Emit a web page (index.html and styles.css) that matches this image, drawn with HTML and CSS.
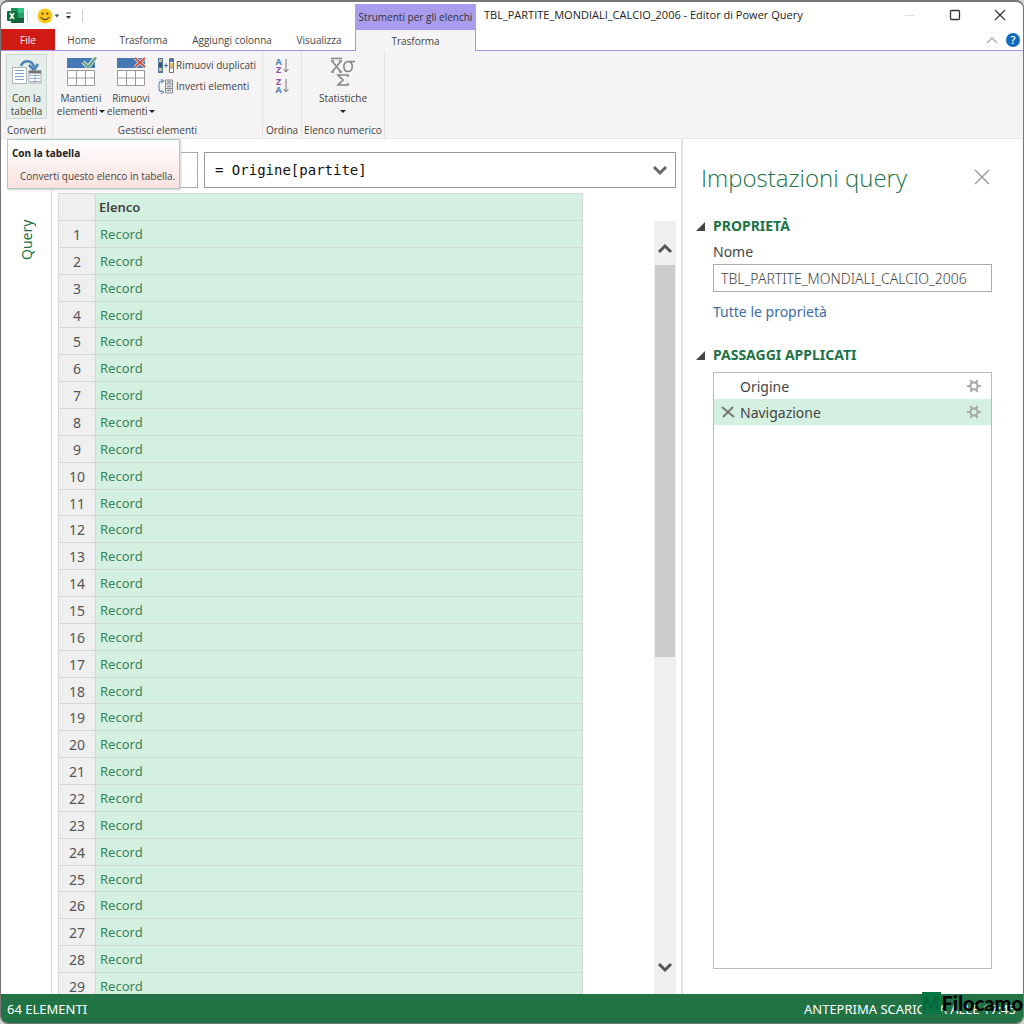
FILE: index.html
```html
<!DOCTYPE html>
<html lang="it">
<head>
<meta charset="utf-8">
<meta name="viewport" content="width=device-width, initial-scale=1">
<title>TBL_PARTITE_MONDIALI_CALCIO_2006 - Editor di Power Query</title>
<link rel="stylesheet" href="styles.css">
</head>
<body>
<div class="window">
  <header class="header">
    <div class="quick">
      <svg class="excel" width="18" height="18" viewBox="0 0 18 18" aria-hidden="true">
        <rect x="4" y="1" width="13" height="15" rx="1" fill="#21a366"/>
        <path d="M4 1h7v5H4z" fill="#1d9358"/><path d="M11 1h5a1 1 0 0 1 1 1v4h-6z" fill="#33c481"/>
        <path d="M4 6h7v5H4z" fill="#107c41"/><path d="M4 11h13v4a1 1 0 0 1-1 1H5a1 1 0 0 1-1-1z" fill="#185c37"/>
        <rect x="0" y="4" width="10" height="10" rx="1" fill="#0f7038"/>
        <path d="M3 6l4 6M7 6l-4 6" stroke="#fff" stroke-width="1.5"/>
      </svg>
      <span class="bar"></span>
      <button class="plain smile" aria-label="Invia feedback">
        <svg width="22" height="16" viewBox="0 0 22 16">
          <circle cx="8" cy="8" r="7.5" fill="#fcc71a"/>
          <circle cx="5.6" cy="5.6" r="1.1" fill="#4d3c20"/><circle cx="10.4" cy="5.6" r="1.1" fill="#4d3c20"/>
          <path d="M3.6 9.2q4.4 5 8.8 0" fill="none" stroke="#5b4316" stroke-width="1.2"/>
          <path d="M17.500 6.500h5l-2.500 3z" fill="#365a50"/>
        </svg>
      </button>
      <button class="plain" aria-label="Personalizza barra di accesso rapido">
        <svg width="7" height="8" viewBox="0 0 7 8"><path d="M1 1h5" stroke="#555"/><path d="M1 4h5L3.500 7z" fill="#333"/></svg>
      </button>
      <span class="bar last"></span>
    </div>
    <div class="context-title">Strumenti per gli elenchi</div>
    <div class="title">
      <span class="title-text">TBL_PARTITE_MONDIALI_CALCIO_2006 - Editor di Power Query</span>
      <div class="controls">
        <button class="plain" aria-label="Riduci a icona"><svg width="12" height="12" viewBox="0 0 12 12"><path d="M1 6.500h10" stroke="#ddd"/></svg></button>
        <button class="plain" aria-label="Ingrandisci"><svg width="12" height="12" viewBox="0 0 12 12"><rect x="1.500" y="1.500" width="9" height="9" rx="1" fill="none" stroke="#333" stroke-width="1.300"/></svg></button>
        <button class="plain" aria-label="Chiudi"><svg width="12" height="12" viewBox="0 0 12 12"><path d="M1 1l10 10M11 1l-10 10" stroke="#333" stroke-width="1.200"/></svg></button>
      </div>
    </div>
    <nav class="tabs">
      <button class="tab file">File</button>
      <button class="tab home">Home</button>
      <button class="tab transform">Trasforma</button>
      <button class="tab add">Aggiungi colonna</button>
      <button class="tab view">Visualizza</button>
    </nav>
    <button class="tab active">Trasforma</button>
    <div class="tab-tools">
      <button class="plain" aria-label="Comprimi barra multifunzione"><svg width="12" height="8" viewBox="0 0 12 8"><path d="M1 7l5-5 5 5" fill="none" stroke="#aaa" stroke-width="1.300"/></svg></button>
      <button class="plain help" aria-label="Guida">?</button>
    </div>
  </header>

  <section class="ribbon" aria-label="Barra multifunzione">
    <div class="group convert">
      <div class="tools">
        <button class="big selected">
          <svg width="32" height="28" viewBox="0 0 32 28">
            <path d="M10 8C12 2 21 1 23 9" fill="none" stroke="#4a7fb8" stroke-width="2.500"/><path d="M18 7l5 5 4-6" fill="none" stroke="#4a7fb8" stroke-width="2.500"/>
            <rect x="1.500" y="9.500" width="14" height="16" fill="#fff" stroke="#b0b5b8"/><path d="M4 12.500h9M4 15.500h9M4 18.500h9M4 21.500h9" stroke="#7aa3d0"/>
            <rect x="18" y="13" width="12" height="12" fill="#fff" stroke="#aaa"/><path d="M18 14h12" stroke="#777" stroke-width="3"/><path d="M19 17.500h10M19 20.500h10M19 23.500h10" stroke="#8db2d8"/><path d="M24 15v10" stroke="#aaa"/>
          </svg>
          <span>Con la<br>tabella</span>
        </button>
      </div>
      <div class="caption">Converti</div>
    </div>
    <div class="group manage">
      <div class="tools">
        <button class="big">
          <svg width="32" height="30" viewBox="0 0 32 30">
            <path d="M2 1h28v10H2z" fill="#4579b5"/><path d="M2.500 13.500h27v15h-27zM2.500 21h27M11.500 13.500v15M20.500 13.500v15" fill="#fff" stroke="#9a9a9a"/>
            <path d="M18 5l5 5 8-10" fill="none" stroke="#dfe8e6" stroke-width="4"/><path d="M18 5l5 5 8-9.500" fill="none" stroke="#69a184" stroke-width="2.300"/>
          </svg>
          <span>Mantieni<br>elementi <i class="down"></i></span>
        </button>
        <button class="big">
          <svg width="32" height="30" viewBox="0 0 32 30">
            <path d="M2 1h28v10H2z" fill="#4579b5"/><path d="M2.500 13.500h27v15h-27zM2.500 21h27M11.500 13.500v15M20.500 13.500v15" fill="#fff" stroke="#9a9a9a"/>
            <path d="M20 1l10 9M30 1l-10 9" stroke="#dfe3ea" stroke-width="3.500"/><path d="M20 1l10 9M30 1l-10 9" stroke="#cc5a45" stroke-width="2"/>
          </svg>
          <span>Rimuovi<br>elementi <i class="down"></i></span>
        </button>
        <div class="stack">
          <button class="small">
            <svg width="16" height="15" viewBox="0 0 16 15"><path d="M0 0h5v15H0z" fill="#4b78a8"/><path d="M1 1h3v3H1zM1 10h3v3H1z" fill="#e9b96b"/><path d="M1 5h3v4H1z" fill="#456"/><path d="M6 7.500h4M8 5.500v4" stroke="#4b7fb8" stroke-width="1.200"/><path d="M11.500.5h4v14h-4zM11.500 10h4" fill="#fff" stroke="#777"/><path d="M11 1h5v3h-5z" fill="#4b78a8"/><path d="M12 5h3v4h-3z" fill="#e9b96b"/></svg>
            Rimuovi duplicati</button>
          <button class="small">
            <svg width="16" height="15" viewBox="0 0 16 15"><path d="M5 2H3Q1 2 1 5v5q0 3 3 3" fill="none" stroke="#4b7fb8"/><path d="M3 0l3 2-3 2M3 11l3 2-3 2" fill="none" stroke="#4b7fb8"/><path d="M7.500 1h7v13h-7zM7.500 5h7M7.500 9.500h7" fill="#eee" stroke="#888"/><path d="M9 3h4M9 7.500h4M9 11.500h4" stroke="#7b92a8" stroke-width="1.500"/></svg>
            Inverti elementi</button>
        </div>
      </div>
      <div class="caption">Gestisci elementi</div>
    </div>
    <div class="group order">
      <div class="tools stack">
        <button class="plain sort" aria-label="Ordina crescente"><span><b class="a">A</b><b class="z">Z</b></span><svg width="6" height="14" viewBox="0 0 6 14"><path d="M3 0v13M.5 10L3 13l2.500-3" fill="none" stroke="#777"/></svg></button>
        <button class="plain sort" aria-label="Ordina decrescente"><span><b class="z">Z</b><b class="a">A</b></span><svg width="6" height="14" viewBox="0 0 6 14"><path d="M3 0v13M.5 10L3 13l2.500-3" fill="none" stroke="#777"/></svg></button>
      </div>
      <div class="caption">Ordina</div>
    </div>
    <div class="group numeric">
      <div class="tools">
        <button class="big">
          <svg width="28" height="30" viewBox="0 0 28 30" fill="none" stroke="#858585" stroke-width="1.600">
            <path d="M2 1.500h11M3 4l9 11M12 4L3 15M2 4h3M10 4h3M2 15h3M10 15h3"/><path d="M26 4.500h-7c-6 1-5 10 0 10s6-8 1-10"/><path d="M19 20v-2H9l5 5-5 5h10v-2"/>
          </svg>
          <span>Statistiche<br><i class="down"></i></span>
        </button>
      </div>
      <div class="caption">Elenco numerico</div>
    </div>
    <div class="tooltip" role="tooltip"><strong>Con la tabella</strong><p>Converti questo elenco in tabella.</p></div>
  </section>

  <main class="main">
    <aside class="rail"><button class="plain query-label">Query</button></aside>
    <section class="work">
      <div class="formula-row">
        <div class="fx"><span>:</span></div>
        <div class="formula">
          <input type="text" aria-label="Barra della formula" value="= Origine[partite]">
          <button class="plain" aria-label="Espandi"><svg width="16" height="12" viewBox="0 0 16 12"><path d="M2 3l6 6 6-6" fill="none" stroke="#666" stroke-width="3"/></svg></button>
        </div>
      </div>
      <div class="data">
        <div class="table-clip">
          <table class="list">
            <thead><tr><th class="num"></th><th>Elenco</th></tr></thead>
            <tbody id="rows"></tbody>
          </table>
        </div>
        <div class="scrollbar">
          <button class="plain" aria-label="Su"><svg width="16" height="12" viewBox="0 0 16 12"><path d="M2 9l6-6 6 6" fill="none" stroke="#555" stroke-width="3"/></svg></button>
          <div class="track"><div class="thumb"></div></div>
          <button class="plain" aria-label="Giù"><svg width="16" height="12" viewBox="0 0 16 12"><path d="M2 3l6 6 6-6" fill="none" stroke="#555" stroke-width="3"/></svg></button>
        </div>
      </div>
    </section>
    <aside class="settings">
      <div class="settings-head">
        <h1>Impostazioni query</h1>
        <button class="plain" aria-label="Chiudi riquadro"><svg width="16" height="16" viewBox="0 0 16 16"><path d="M1 1l14 14M15 1L1 15" stroke="#999" stroke-width="1.400"/></svg></button>
      </div>
      <h2><i class="corner"></i>PROPRIETÀ</h2>
      <div class="properties">
        <label for="name">Nome</label>
        <input id="name" type="text" value="TBL_PARTITE_MONDIALI_CALCIO_2006">
        <a href="#">Tutte le proprietà</a>
      </div>
      <h2><i class="corner"></i>PASSAGGI APPLICATI</h2>
      <ul class="steps">
        <li><span class="del"></span><span class="step">Origine</span>
          <button class="plain" aria-label="Impostazioni Origine"><svg width="14" height="14" viewBox="0 0 14 14" fill="none" stroke="#aaa"><circle cx="7" cy="7" r="3.600" stroke-width="2.200"/><path d="M0 7h3M11 7h3M3.500 1l1.500 3M10.500 1L9 4M3.500 13L5 10M10.500 13L9 10" stroke-width="2"/></svg></button></li>
        <li class="current"><button class="plain del" aria-label="Elimina passaggio"><svg width="14" height="12" viewBox="0 0 14 12"><path d="M1 1l12 10M12 1L2 11" stroke="#777" stroke-width="1.800"/></svg></button><span class="step">Navigazione</span>
          <button class="plain" aria-label="Impostazioni Navigazione"><svg width="14" height="14" viewBox="0 0 14 14" fill="none" stroke="#aaa"><circle cx="7" cy="7" r="3.600" stroke-width="2.200"/><path d="M0 7h3M11 7h3M3.500 1l1.500 3M10.500 1L9 4M3.500 13L5 10M10.500 13L9 10" stroke-width="2"/></svg></button></li>
      </ul>
    </aside>
  </main>

  <footer class="status">
    <span>64 ELEMENTI</span><span>ANTEPRIMA SCARICATA ALLE 17:45</span>
    <div class="brand"><span class="brand-mark">M</span><span class="brand-name">Filocamo</span></div>
  </footer>
</div>
<script src="rows.js"></script>
</body>
</html>
```

FILE: styles.css
```css
* { box-sizing: border-box; }
body {
  margin: 0;
  background: #d4d4d4;
  font-family: "Open Sans", "Noto Sans", sans-serif;
  color: #444;
}
button, input { font: inherit; color: inherit; }
button { border: 0; padding: 0; background: none; }
svg { display: block; flex: none; }
.plain { display: flex; align-items: center; justify-content: center; }

.window {
  height: 100vh;
  display: flex;
  flex-direction: column;
  background: #fff;
  border: 1px solid #777;
  border-top-width: 2px;
  border-radius: 8px;
  overflow: hidden;
}

/* Title bar and tabs */
.header {
  display: grid;
  grid-template-columns: 354px 121px 1fr;
  grid-template-rows: 27px 22px;
  font-size: 10px;
  flex: none;
}
.quick { display: flex; align-items: center; padding-left: 6px; }
.bar { width: 1px; height: 12px; background: #ccd6d2; margin: 0 9px 0 2px; }
.bar.last { margin-left: 10px; }
.smile { margin-right: 6px; }
.context-title {
  margin-top: 2px;
  background: #a99cec;
  color: #333;
  line-height: 27px;
  text-align: center;
  white-space: nowrap;
}
.title { display: flex; align-items: center; justify-content: space-between; padding: 0 17px 2px 8px; color: #222; min-width: 0; }
.title-text { font-size: 11px; white-space: nowrap; }
.controls { display: flex; gap: 33px; }
.tabs { display: flex; border-bottom: 1px solid #a394ea; }
.tab { text-align: center; line-height: 22px; white-space: nowrap; }
.file { width: 54px; background: #cf1b14; color: #fff; }
.home { width: 53px; }
.transform { width: 71px; }
.add { width: 106px; }
.view { width: 68px; }
.active { background: #f5f3f4; border: 1px solid #a394ea; border-bottom: 0; line-height: 20px; }
.tab-tools { display: flex; justify-content: flex-end; align-items: center; gap: 8px; padding-right: 3px; border-bottom: 1px solid #a394ea; }
.help { width: 14px; height: 14px; border-radius: 50%; background: #0f6cbd; color: #fff; font-size: 11px; font-weight: 600; }

/* Ribbon */
.ribbon {
  position: relative;
  display: flex;
  height: 88px;
  flex: none;
  background: #f5f3f4;
  border-bottom: 1px solid #e8e6e7;
  font-size: 10px;
}
.group { display: flex; flex-direction: column; justify-content: space-between; padding-top: 3px; border-right: 1px solid #e3e1e2; }
.convert { width: 52px; }
.manage { width: 210px; }
.order { width: 39px; }
.numeric { width: 83px; }
.tools { display: flex; }
.convert .tools { padding-left: 5px; }
.numeric .tools { justify-content: center; }
.big { display: flex; flex-direction: column; align-items: center; justify-content: space-between; width: 50px; height: 65px; padding: 3px 0 1px; line-height: 13px; white-space: nowrap; }
.selected { width: 41px; background: #e6eeea; border: 1px solid #c8dbd2; padding-bottom: 0; }
.down { display: inline-block; border: 3px solid transparent; border-top: 3px solid #222; border-bottom: 0; vertical-align: 2px; margin-left: -1px; }
.caption { text-align: center; line-height: 16px; white-space: nowrap; }
.stack { display: flex; flex-direction: column; gap: 6px; padding-top: 4px; }
.manage .stack { padding-left: 2px; }
.manage .tools { padding-left: 3px; }
.small { display: flex; align-items: center; gap: 2px; line-height: 15px; white-space: nowrap; }
.sort { gap: 1px; height: 16px; font-size: 9px; line-height: 8px; }
.order .stack { align-items: center; gap: 4px; }
.sort b { display: block; }
.a { color: #4b7fb8; }
.z { color: #8a55ab; }
.tooltip {
  position: absolute;
  left: 6px;
  top: 88px;
  width: 173px;
  height: 50px;
  z-index: 2;
  padding: 6px 4px;
  background: linear-gradient(#fff, #f9e2df);
  border: 1px solid #a9cdbe;
  box-shadow: 1px 1px 2px #ccc;
  line-height: 14px;
  white-space: nowrap;
}
.tooltip strong { color: #222; }
.tooltip p { margin: 9px 0 0 8px; }

/* Workspace */
.main, .status { font-family: "Noto Sans", "Open Sans", sans-serif; }
.main { display: flex; flex: 1; min-height: 0; }
.rail { width: 51px; border-right: 1px solid #d8d8d8; padding-top: 76px; flex: none; }
.query-label { writing-mode: vertical-rl; transform: rotate(180deg); width: 50px; height: 50px; color: #217346; font-size: 14px; }
.work { flex: 1; min-width: 0; display: flex; flex-direction: column; padding: 13px 5px 0 6px; }
.formula-row { display: flex; gap: 6px; flex: none; }
.fx { width: 140px; height: 36px; border: 1px solid #aaa; padding: 6px 16px; text-align: right; color: #aaa; font-size: 14px; }
.formula { flex: 1; height: 36px; border: 1px solid #999; display: flex; align-items: center; padding: 0 7px 0 10px; min-width: 0; }
.formula input { flex: 1; min-width: 0; border: 0; padding: 0; background: none; outline: 0; color: #111; font-family: "DejaVu Sans Mono", monospace; font-size: 14px; }
.data { display: flex; justify-content: space-between; flex: 1; min-height: 0; padding-top: 5px; }
.table-clip { width: 525px; overflow: hidden; }
.list { width: 100%; height: 807px; table-layout: fixed; border-collapse: collapse; background: #d4f0e0; font-size: 13px; line-height: 18px; }
.list th, .list td { border: 1px solid #d0d9d4; padding: 0 4px; text-align: left; }
.list th { height: 27px; font-weight: 600; padding-left: 3px; }
.list td { color: #37835a; }
.list .num { width: 37px; background: #efefef; color: #555; font-weight: 400; text-align: center; padding: 2px 0 0; font-size: 14px; }
.scrollbar { width: 22px; margin-top: 28px; background: #efefef; display: flex; flex-direction: column; }
.scrollbar button { height: 44px; padding-top: 12px; }
.scrollbar button:last-child { height: 54px; padding-top: 0; }
.track { flex: 1; padding: 0 1px; }
.thumb { height: 58%; background: #cbcbcb; }

/* Query settings */
.settings { width: 342px; flex: none; border-left: 2px solid #e2e2e2; padding: 20px 31px 25px 13px; display: flex; flex-direction: column; }
.settings-head { display: flex; align-items: center; justify-content: space-between; padding: 0 2px 0 5px; height: 36px; }
h1 { margin: 0; font-family: "Open Sans", sans-serif; font-size: 24px; font-weight: 300; color: #217346; white-space: nowrap; }
h2 { display: flex; align-items: center; gap: 8px; margin: 21px 0 0; font-size: 14px; line-height: 20px; font-weight: 700; color: #217346; }
.corner { width: 0; height: 0; border-left: 9px solid transparent; border-bottom: 9px solid #444; }
.properties { display: flex; flex-direction: column; align-items: stretch; padding: 6px 0 2px 17px; font-size: 14px; line-height: 20px; }
.properties input { height: 28px; margin: 2px 0 10px; padding: 0 7px; border: 1px solid #aaa; font-weight: 300; }
.properties a { color: #3e6ba5; text-decoration: none; }
.steps { flex: 1; margin: 7px 0 0 17px; padding: 0; border: 1px solid #bbb; list-style: none; font-size: 14px; }
.steps li { display: flex; align-items: center; height: 26px; padding: 0 10px 0 7px; }
.steps .current { background: #d4f0e0; }
.del { width: 14px; }
.step { flex: 1; padding-left: 5px; }

.status { position: relative; z-index: 3; flex: none; height: 29px; padding: 0 7px 0 6px; display: flex; align-items: center; justify-content: space-between; background: #217346; color: #fff; font-size: 13px; white-space: nowrap; }
.brand { position: absolute; right: 0; top: -2px; display: flex; gap: 1px; color: #000; font-family: Lato, sans-serif; font-weight: 900; }
.brand-mark { width: 19px; height: 22px; background: #087542; color: #07683b; font-size: 18px; line-height: 22px; text-align: center; }
.brand-name { font-size: 20px; line-height: 22px; }
```

FILE: rows.js
```js
const body = document.getElementById("rows");
for (let n = 1; n <= 29; n++) {
  const row = body.insertRow();
  const index = row.insertCell();
  index.className = "num";
  index.textContent = n;
  row.insertCell().textContent = "Record";
}
```
